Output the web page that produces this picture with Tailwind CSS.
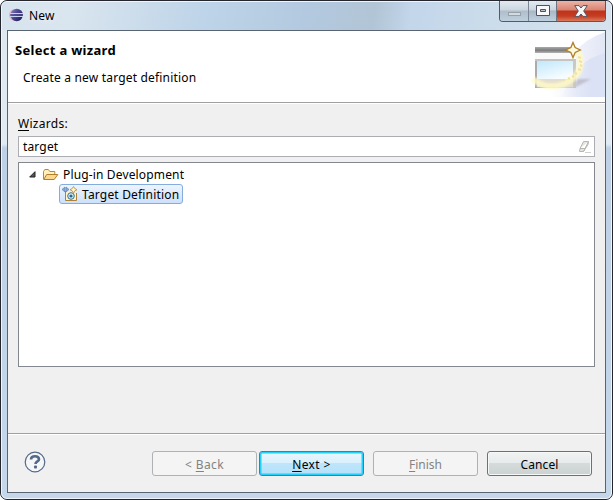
<!DOCTYPE html>
<html lang="en">
<head>
<meta charset="utf-8">
<title>New</title>
<script src="https://cdn.jsdelivr.net/npm/@tailwindcss/browser@4"></script>
</head>
<body class="w-[613px] h-[500px] overflow-hidden bg-white font-['Noto_Sans',sans-serif] text-[12px] leading-4 text-black">
<div class="relative w-[613px] h-[500px] rounded-[7px] border border-[#25252e] bg-[#c3d5e9] overflow-hidden">
 <div class="h-full rounded-[6px] border border-[#eef6fc] bg-[linear-gradient(180deg,#dce7f0_0,#e0ebf3_142px,#bed0e5_146px,#c5d7e9_100%)] flex flex-col">
  <!-- title bar -->
  <div class="h-7 shrink-0 flex items-start rounded-t-[5px] bg-[linear-gradient(100deg,#d7e3ed_0%,#d9e5ef_12%,#bed4e8_33%,#b3c9df_50%,#b2c5d6_61%,#c3d6ea_67%,#cadbea_78%,#d6e3ee_100%)]">
   <svg class="ml-[7px] mt-[6px]" width="14" height="14" viewBox="0 0 14 14">
    <defs><linearGradient id="ec" x1="0" x2="1" y1="0" y2=".7"><stop offset="0" stop-color="#9291bf"/><stop offset=".4" stop-color="#55539b"/><stop offset="1" stop-color="#211b5d"/></linearGradient></defs>
    <circle cx="6" cy="7" r="6" fill="#edacc7"/><circle cx="7.7" cy="7" r="6.2" fill="url(#ec)"/>
    <path d="M1 5.5h13M1 8.5h13" stroke="#c7d3ef"/><path d="M1 7h13" stroke="#544f93"/>
   </svg>
   <span class="ml-[6px] mt-[6px] tracking-[.15px] [text-shadow:0_0_8px_white]">New</span>
   <div class="ml-auto mr-[5px] -mt-px h-[21px] w-[107px] flex rounded-b-[4px] border border-t-0 border-[#525a65] overflow-hidden">
    <div class="w-[29px] border-r border-[#7c8795] bg-[linear-gradient(#e2eaf0_0,#cbd6df_45%,#b0bdca_50%,#c0d0dd_100%)] flex items-center justify-center"><svg class="mt-[6px]" width="13" height="4"><rect x=".5" y=".5" width="12" height="3" fill="#d3dbe1" stroke="#96a1aa"/></svg></div>
    <div class="w-[28px] border-r border-[#6c7580] bg-[linear-gradient(#e3ebf1_0,#c9d5df_45%,#a9b7c5_50%,#bfd0df_100%)] flex items-center justify-center"><svg class="-mt-px" width="14" height="12"><path fill-rule="evenodd" fill="#f8f8f8" stroke="#4c5261" d="M.5.5h13v10H.5zM4.500 4.500v2h5v-2z"/></svg></div>
    <div class="flex-1 bg-[linear-gradient(#edb3a6_0,#d98472_45%,#bf321b_50%,#c43d22_75%,#dc785b_100%)] flex items-center justify-center"><svg width="14" height="12"><path fill="#f7f7f7" stroke="#525563" d="M.7.600h4.300L7 3 9 .6h4.300L9.700 6l3.600 5.400H9L7 9l-2 2.400H.7L4.300 6z"/></svg></div>
   </div>
  </div>
  <!-- client area -->
  <div class="ml-[5px] w-[599px] h-[463px] border border-[#586471] bg-[#f0f0f0] flex flex-col">
   <div class="h-[71px] shrink-0 bg-white flex justify-between">
    <div class="flex flex-col">
     <span class="ml-[7px] mt-[11px] font-bold text-[13px] tracking-[.3px]">Select a wizard</span>
     <span class="ml-[15px] mt-[12px] tracking-[.18px]">Create a new target definition</span>
    </div>
    <svg width="75" height="66" viewBox="0 0 75 66">
     <defs>
      <linearGradient id="bg" x1="0" x2="1" y1="0" y2="0"><stop offset="0" stop-color="#fff"/><stop offset=".55" stop-color="#eef1fa"/><stop offset="1" stop-color="#e2e7f6"/></linearGradient>
      <linearGradient id="bg2" x1="0" x2="1" y1="0" y2="0"><stop offset="0" stop-color="#dce2f5" stop-opacity="0"/><stop offset=".7" stop-color="#dce2f5"/></linearGradient>
      <linearGradient id="sky" x1="0" x2=".5" y1="0" y2="1"><stop stop-color="#c0e8fb"/><stop offset="1" stop-color="#f7fcff"/></linearGradient>
      <linearGradient id="bar" x1="0" x2="0" y1="0" y2="1"><stop stop-color="#aaa"/><stop offset=".55" stop-color="#7c7c7c"/><stop offset="1" stop-color="#b5b5b5"/></linearGradient>
      <linearGradient id="fr" x1="0" x2="1" y1="0" y2="0"><stop stop-color="#aaa"/><stop offset=".7" stop-color="#d6d6d6"/><stop offset="1" stop-color="#c8c6bc"/></linearGradient>
      <filter id="bl" x="-20%" y="-20%" width="140%" height="140%"><feGaussianBlur stdDeviation="1.200"/></filter>
     </defs>
     <path d="M75 1Q55 8 44 22L20 66h55z" fill="url(#bg)"/><path d="M75 22Q60 26 49 36L30 66h45z" fill="url(#bg2)"/>
     <path d="M44 57L61 48 47 48z" fill="#8e8694" opacity=".4" filter="url(#bl)"/>
     <rect x="5" y="16" width="41" height="41" fill="url(#fr)"/><rect x="5" y="16" width="41" height="6" fill="url(#bar)"/>
     <rect x="5" y="22" width="41" height="6" fill="#fafafa"/><rect x="5" y="28" width="41" height="2" fill="#c4c4c4"/>
     <rect x="7" y="30" width="36" height="18" fill="url(#sky)"/><rect x="7" y="48" width="36" height="8" fill="#e2ddcf"/>
     <path d="M48 20C54 35 49 46 34 53C23 57 12 56 3 48" fill="none" stroke="#fffac8" stroke-width="6" opacity=".85" filter="url(#bl)"/>
     <path d="M48 26l3 1m-2 3l3 1m-2 3l2 1m-4 3l3 1m-6 3l2 1m-5 2l2 1m-6 1l2 1m-7 1l2 0" stroke="#f5e09c" stroke-width="2"/>
     <path d="M43 12l2 4.800 4.800 2.200-4.800 2.200-2 4.800-2-4.800-4.800-2.200 4.800-2.200z" fill="#fff9df" stroke="#b07e25" stroke-width="1.200" transform="translate(43 19) scale(1.080) translate(-43 -19)"/>
    </svg>
   </div>
   <div class="h-[2px] shrink-0 bg-white border-t border-[#a0a0a0]"></div>
   <div class="h-[329px] shrink-0 px-[10px] pt-[12px] flex flex-col">
    <div class="h-[20px] leading-[16px] tracking-[.3px]"><span class="inline-block h-[15px] border-b border-black">W</span>izards:</div>
    <div class="h-[21px] shrink-0 border border-[#abadb3] bg-white flex items-center justify-between pl-[4px] pr-[2px]">
     <span class="mt-px tracking-[.15px]">target</span>
     <svg width="14" height="14" viewBox="0 0 14 14"><path d="M5.500 1.500h5l-3.500 7H2zM2 8.500l-.5 3h4l4.500-7 .5-3M7 8.500l-1.500 3" fill="#e5e5e2" stroke="#b6b6b3"/><path d="M7 12.500h6" stroke="#cfcfcb"/></svg>
    </div>
    <div class="mt-[5px] h-[205px] shrink-0 border border-[#828790] bg-white pt-[2px] pl-[10px]">
     <div class="h-[19px] flex items-center">
      <svg width="7" height="7"><path d="M6 .7V6H.7z" fill="#555" stroke="#222"/></svg>
      <svg class="ml-[7px]" width="16" height="14" viewBox="0 0 16 14"><path d="M.5 11V3.500l1.300-2h3.500l1.500 2h5v3" fill="#fff0bd" stroke="#b98734"/><path d="M.7 11.500l3-5h11.100l-3.600 5z" fill="#fbd88b" stroke="#b07d2c"/></svg>
      <span class="ml-[4px] mt-px tracking-[.15px]">Plug-in Development</span>
     </div>
     <div class="ml-[30px] h-[20px] w-[124px] rounded-[3px] border border-[#84acdd] bg-[linear-gradient(#edf4fd,#cde1fc)] flex items-center">
      <svg class="ml-[2px] shrink-0" width="16" height="16" viewBox="0 0 16 16"><path d="M3.500 5v9.500h11V7" fill="#fff2cc" stroke="#ad8136"/><circle cx="9" cy="10" r="3.300" fill="#d9eef7" stroke="#34718d"/><circle cx="9" cy="10" r="1.600" fill="#266594"/><path d="M0 3.500L3 1v5zM4 1l3 2.500L4 6z" fill="#8ba7cf" stroke="#6288bb" stroke-width=".7"/><path d="M11.500.500l1.200 2 2.300 1.200-2.300 1.200-1.200 2.300-1.200-2.300L8 3.700l2.300-1.200z" fill="#fffadc" stroke="#c99a35"/></svg>
      <span class="ml-[4px] mt-px whitespace-nowrap tracking-[.18px]">Target Definition</span>
     </div>
    </div>
   </div>
   <div class="h-[2px] shrink-0 bg-white border-t border-[#a0a0a0]"></div>
   <div class="flex-1 flex items-start pl-[16px] pt-[16px]">
    <svg width="22" height="22" viewBox="0 0 22 22"><circle cx="11" cy="11" r="9.800" fill="#f5f6f7" stroke="#536989" stroke-width="1.200"/><path d="M7 8.500Q7 5.200 11 5.200t4 3.300c0 2-3.500 2-3.500 4.500" fill="none" stroke="#536989" stroke-width="2.600"/><rect x="10" y="14.500" width="3" height="3" rx="1" fill="#536989"/></svg>
    <div class="ml-[106px] w-[105px] h-[25px] border border-[#adb2b5] rounded-[3px] bg-[#f4f4f4] text-[#838383] text-center leading-[25px] tracking-[.4px]">&lt; <u class="underline-offset-2">B</u>ack</div>
    <div class="ml-[2px] w-[105px] h-[25px] border border-[#3c7fb1] rounded-[3px] bg-[linear-gradient(#eaf6fd_0,#d9f0fc_49%,#bde6fd_50%,#b5e0f8_100%)] shadow-[inset_0_0_0_1.500px_#22d0f9] text-center leading-[25px] tracking-[.4px]"><u class="underline-offset-2">N</u>ext &gt;</div>
    <div class="ml-[9px] w-[105px] h-[25px] border border-[#adb2b5] rounded-[3px] bg-[#f4f4f4] text-[#838383] text-center leading-[25px]"><u class="underline-offset-2">F</u>inish</div>
    <div class="ml-[9px] w-[105px] h-[25px] border border-[#707070] rounded-[3px] bg-[linear-gradient(#f2f2f2_0,#e7ebeb_49%,#d5dbdb_50%,#ccd1d1_100%)] shadow-[inset_0_0_0_1px_#f5f8f8] text-center leading-[25px] tracking-[.1px]">Cancel</div>
   </div>
  </div>
 </div>
</div>
</body>
</html>
